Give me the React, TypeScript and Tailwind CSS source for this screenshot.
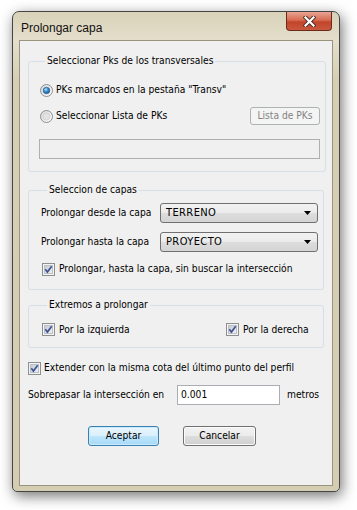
import React from "react";

// Win7-Dialog "Prolongar capa" – Basic-Theme mit beigem Rahmen.

function Radio({ checked }: { checked?: boolean }) {
  const id = checked ? "rgOn" : "rgOff";
  return (
    <svg width="13" height="13" viewBox="0 0 13 13" className="shrink-0">
      <defs>
        <linearGradient id={id + "o"} x1="0" y1="0" x2="1" y2="1">
          <stop offset="0" stopColor="#d4d4d4" />
          <stop offset="1" stopColor="#ffffff" />
        </linearGradient>
        <radialGradient id={id} cx="0.4" cy="0.35" r="0.7">
          <stop offset="0" stopColor="#b8e6fb" />
          <stop offset="0.45" stopColor="#3c8fd0" />
          <stop offset="1" stopColor="#174f86" />
        </radialGradient>
      </defs>
      <circle cx="6.5" cy="6.5" r="6" fill={`url(#${id}o)`} stroke="#8e8f8f" />
      {checked ? (
        <circle cx="6.5" cy="6.5" r="3.3" fill={`url(#${id})`} stroke="#2a5a8a" strokeWidth="0.6" />
      ) : (
        <circle cx="6.5" cy="6.5" r="3.6" fill="#e2e2e2" stroke="#c9c9c9" strokeWidth="0.6" />
      )}
    </svg>
  );
}

function Check() {
  return (
    <svg width="13" height="13" viewBox="0 0 13 13" className="shrink-0">
      <defs>
        <linearGradient id="cbg" x1="0" y1="0" x2="1" y2="1">
          <stop offset="0" stopColor="#c3c8cf" />
          <stop offset="1" stopColor="#f3f3f3" />
        </linearGradient>
      </defs>
      <rect x="0.5" y="0.5" width="12" height="12" fill="#f4f4f4" stroke="#8e8f8f" />
      <rect x="2.5" y="2.5" width="8" height="8" fill="url(#cbg)" stroke="#bcc1c8" />
      <path d="M3.3 6.3 L5.4 9 L9.7 3.2" stroke="#3e5393" strokeWidth="1.7" fill="none" />
    </svg>
  );
}

function Combo({ value }: { value: string }) {
  return (
    <div className="flex h-[20px] w-[158px] shrink-0 items-center rounded-[3px] border border-[#707070] bg-[linear-gradient(180deg,#f2f2f2_0%,#ebebeb_50%,#dddddd_51%,#d4d4d4_100%)] pl-[5px] pr-[4px]">
      <span className="text-[11px] tracking-[0.4px] text-black">{value}</span>
      <svg width="7" height="4" viewBox="0 0 7 4" className="ml-auto mr-[2px]">
        <path d="M0 0 H7 L3.5 4 Z" fill="#000" />
      </svg>
    </div>
  );
}

function Group({ title, className, children }: { title: string; className?: string; children: React.ReactNode }) {
  return (
    <fieldset className={`mx-[8px] rounded-[3px] border border-[#d5dfe5] ${className ?? ""}`}>
      <legend className="ml-[6px] px-[2px] leading-[14px] text-black">{title}</legend>
      {children}
    </fieldset>
  );
}

export default function App() {
  return (
    <div className="h-[510px] w-[357px] bg-white pl-[12px] pt-[11px] font-['DejaVu_Sans_Condensed','Liberation_Sans',Arial,sans-serif] text-[10.2px] text-black">
      <div className="flex h-[481px] w-[328px] flex-col rounded-t-[7px] rounded-b-[5px] border border-[#454545] bg-[linear-gradient(180deg,#d9d2b9_0%,#e4decb_6%,#d7cfb4_14%,#d5cdb1_100%)] shadow-[2px_4px_14px_rgba(0,0,0,0.55)]">
        {/* barra de titulo */}
        <div className="flex h-[28px] items-start">
          <span className="ml-[8px] mt-[9px] font-['Liberation_Sans',Arial,sans-serif] text-[12px] leading-[14px] text-[#111]">Prolongar capa</span>
          <div className="ml-auto mr-[7px] flex h-[19px] w-[46px] items-center justify-center rounded-b-[4px] border border-t-0 border-[#6b2a1c] bg-[linear-gradient(180deg,#e7a592_0%,#d86b52_45%,#c2452b_55%,#c9583c_100%)]">
            <svg width="13" height="11" viewBox="0 0 13 11">
              <path d="M2.5 1.5 L10.5 9.5 M10.5 1.5 L2.5 9.5" stroke="#4a2a24" strokeWidth="4" strokeLinecap="square" />
              <path d="M2.5 1.5 L10.5 9.5 M10.5 1.5 L2.5 9.5" stroke="#ffffff" strokeWidth="2.2" strokeLinecap="square" />
            </svg>
          </div>
        </div>

        {/* area cliente */}
        <div className="mx-[6px] flex h-[446px] flex-col border border-[#9a947d] bg-[#f0f0f0]">
          <Group title="Seleccionar Pks de los transversales" className="mt-[13px] pb-[12px] pl-[10px] pr-[5px]">
            <div className="mt-[14px] flex h-[16px] items-center gap-[3px] pl-[1px]">
              <Radio checked />
              <span>PKs marcados en la pestaña "Transv"</span>
            </div>
            <div className="mt-[9px] flex h-[18px] items-center gap-[3px] pl-[1px]">
              <Radio />
              <span>Seleccionar Lista de PKs</span>
              <div className="ml-auto flex h-[18px] w-[70px] items-center justify-center rounded-[3px] border border-[#adb2b5] bg-[#f4f4f4] text-[#838383]">
                Lista de PKs
              </div>
            </div>
            <div className="mt-[14px] h-[20px] w-[281px] border border-[#afafaf] bg-[#f0f0f0]" />
          </Group>

          <Group title="Seleccion de capas" className="mt-[11px] pb-[12px] pl-[12px] pr-[5px]">
            <div className="mt-[6px] flex items-center">
              <span className="whitespace-nowrap">Prolongar desde la capa</span>
              <div className="ml-auto">
                <Combo value="TERRENO" />
              </div>
            </div>
            <div className="mt-[9px] flex items-center">
              <span className="whitespace-nowrap">Prolongar hasta la capa</span>
              <div className="ml-auto">
                <Combo value="PROYECTO" />
              </div>
            </div>
            <div className="mt-[9px] flex h-[16px] items-center gap-[4px] pl-[1px]">
              <Check />
              <span className="whitespace-nowrap">Prolongar, hasta la capa, sin buscar la intersección</span>
            </div>
          </Group>

          <Group title="Extremos a prolongar" className="mt-[8px] pb-[9px] pl-[12px] pr-[5px]">
            <div className="mt-[10px] flex h-[16px] items-center pl-[1px]">
              <div className="flex w-[184px] items-center gap-[4px]">
                <Check />
                <span>Por la izquierda</span>
              </div>
              <div className="flex items-center gap-[4px]">
                <Check />
                <span>Por la derecha</span>
              </div>
            </div>
          </Group>

          <div className="mt-[12px] ml-[8px] flex h-[16px] items-center gap-[3px]">
            <Check />
            <span className="whitespace-nowrap">Extender con la misma cota del último punto del perfil</span>
          </div>

          <div className="mt-[9px] ml-[8px] flex h-[20px] items-center">
            <span className="w-[149px] whitespace-nowrap">Sobrepasar la intersección en</span>
            <div className="flex h-[20px] w-[103px] items-center border border-[#abadb3] bg-white pl-[3px]">0.001</div>
            <span className="ml-[7px]">metros</span>
          </div>

          <div className="mt-[21px] ml-[68px] flex gap-[24px]">
            <div className="flex h-[20px] w-[71px] items-center justify-center rounded-[3px] border border-[#3c7fb1] bg-[linear-gradient(180deg,#eaf6fd_0%,#d9f0fc_50%,#bee6fd_51%,#a7d9f5_100%)] shadow-[inset_0_0_0_1px_#c8ecff]">
              Aceptar
            </div>
            <div className="flex h-[20px] w-[73px] items-center justify-center rounded-[3px] border border-[#707070] bg-[linear-gradient(180deg,#f2f2f2_0%,#ebebeb_50%,#dddddd_51%,#cfcfcf_100%)] shadow-[inset_0_0_0_1px_#fbfbfb]">
              Cancelar
            </div>
          </div>
        </div>
      </div>
    </div>
  );
}
